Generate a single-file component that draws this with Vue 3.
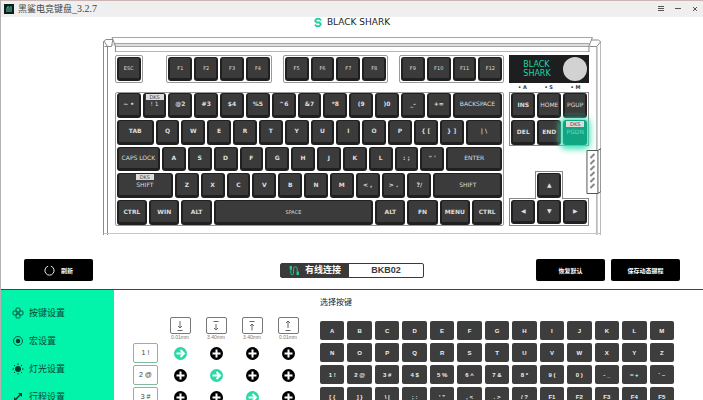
<script setup>
import { ref } from 'vue';

const k = (label, u = 1, opts = {}) => ({ label, u, ...opts });
const letters = (str) => str.split('').map((c) => k(c));

const functionGroups = [
  { start: 1, keys: ['ESC'] },
  { start: 9, keys: ['F1', 'F2', 'F3', 'F4'] },
  { start: 27, keys: ['F5', 'F6', 'F7', 'F8'] },
  { start: 45, keys: ['F9', 'F10', 'F11', 'F12'] },
];

const mainKeys = [
  k('~ •'), k('! 1', 1, { dks: true, thin: true }), k('@2'), k('#3'), k('$4'), k('%5'), k('^6'), k('&7'),
  k('*8'), k('(9'), k(')0'), k('_-'), k('+='), k('BACKSPACE', 2, { thin: true }),
  k('TAB', 1.5), ...letters('QWERTYUIOP'), k('{ ['), k('} ]'), k('| \\', 1.5),
  k('CAPS LOCK', 1.75, { thin: true }), ...letters('ASDFGHJKL'), k(': ;'), k('" \''),
  k('ENTER', 2.25, { thin: true }),
  k('SHIFT', 2.25, { thin: true, dks: true }), ...letters('ZXCVBNM'), k('< ,'), k('> .'), k('?/'),
  k('SHIFT', 2.75, { thin: true }),
  k('CTRL', 1.25), k('WIN', 1.25), k('ALT', 1.25), k('SPACE', 6.25, { small: true }),
  k('ALT', 1.25), k('FN', 1.25), k('MENU', 1.25), k('CTRL', 1.25),
];

const navKeys = [
  k('INS'), k('HOME', 1, { thin: true }), k('PGUP', 1, { thin: true }),
  k('DEL'), k('END'), k('PGDN', 1, { thin: true, dks: true }),
];
const selected = ref('PGDN');

const menu = [
  { icon: 'keys', text: '按键设置' },
  { icon: 'macro', text: '宏设置' },
  { icon: 'light', text: '灯光设置' },
  { icon: 'travel', text: '行程设置' },
];

const stages = [
  { path: 'M6 1v7M4 6l2 2 2-2M3.5 10.5h5', depth: '0.01mm' },
  { path: 'M3.5 1.5h5M6 4v6M4 8l2 2 2-2', depth: '3.40mm' },
  { path: 'M3.5 1.5h5M6 10.5v-6M4 6l2-2 2 2', depth: '3.40mm' },
  { path: 'M6 8V1M4 3l2-2 2 2M3.5 10.5h5', depth: '0.01mm' },
];
const bindings = ref([
  { name: '1 !', active: 0 },
  { name: '2 @', active: 1 },
  { name: '3 #', active: 2 },
]);

const pickerKeys = [
  ...'ABCDEFGHIJKLMNOPQRSTUVWXYZ'.split(''),
  '1 !', '2 @', '3 #', '4 $', '5 %', '6 ^', '7 &', '8 *', '9 (', '0 )', '- _', '= +', '` ~',
  '[ {', '] }', '\\ |', '; :', '\' "', ', <', '. >', '/ ?', 'F1', 'F2', 'F3', 'F4', 'F5',
];
</script>

<template>
  <div class="app">
    <header class="titlebar">
      <svg class="app-icon" viewBox="0 0 10 10">
        <rect width="10" height="10" fill="#07201b" />
        <path d="M3 8V4l1.5-2M5 8V3M7 8V2" stroke="#6fc7ae" stroke-width="1" fill="none" />
      </svg>
      <span class="title">黑鲨电竞键盘<span class="version">_3.2.7</span></span>
      <button class="win-btn" aria-label="菜单">
        <svg viewBox="0 0 6 6"><path d="M0 .5h6M0 2.5h6M0 4.500h6" /></svg>
      </button>
      <button class="win-btn" aria-label="最小化">
        <svg viewBox="0 0 6 6"><path d="M0 2.5h6" /></svg>
      </button>
      <button class="win-btn" aria-label="关闭">
        <svg viewBox="0 0 6 6"><path d="M1 1l4 4M5 1 1 5" /></svg>
      </button>
    </header>

    <div class="brand">
      <svg viewBox="0 0 8 10">
        <path d="M7.5 2.5 5.5 1h-3L1 2.5v1L2.5 5h3L7 6.5v1L5.5 9h-3L.5 7.5M4 0v2M4 8v2" />
      </svg>
      <span>BLACK SHARK</span>
    </div>

    <section class="board">
      <svg class="case" viewBox="0 0 500 199" preserveAspectRatio="none">
        <g fill="none" stroke="#8a8a8a" stroke-width="1">
          <rect x="9" y="7" width="480" height="2" fill="#dedede" stroke="none" />
          <path d="M9 .5h482M12 6.5h476M12 9.5h476" stroke="#a5a5a5" />
          <path d="M12 14.5h476" stroke="#b5b5b5" />
          <path d="M.5 198V4.500L3 2.500h7L8.500 9.500h-7M9 .5 12.500 9v6M4.500 10v188M1 4l3.500 5.500" />
          <path d="M491 .5 487.500 9v6M490 3h7l2.500 2V198M499 5l-3.500 4.500h-7M495.500 10v188" />
          <path d="M.5 196.5h499" stroke="#c4c4c4" />
        </g>
        <g stroke="#555" fill="#fff">
          <path d="M485.5 113.5h11v43h-11zM496.5 113.5l3-2v43l-3 2" />
          <path d="M489 121l4-4M489 127l4-4M489 133l4-4M489 139l4-4M489 145l4-4M489 151l4-4" stroke="#888" stroke-width="2" />
        </g>
      </svg>

      <div class="main-block">
        <div class="function-row">
          <div
            v-for="group in functionGroups"
            :key="group.start"
            class="group"
            :class="'from-' + group.start"
          >
            <button v-for="name in group.keys" :key="name" class="key small">{{ name }}</button>
          </div>
        </div>
        <div class="main-keys">
          <button
            v-for="(key, i) in mainKeys"
            :key="i"
            class="key"
            :class="{ thin: key.thin, small: key.small }"
            :style="{ gridColumn: 'span ' + key.u * 4 }"
          >
            <span v-if="key.dks" class="dks">DKS</span>{{ key.label }}
          </button>
        </div>
      </div>

      <div class="side-block">
        <div class="screen">
          <span>BLACK<br />SHARK</span>
          <i class="knob"></i>
        </div>
        <div class="leds"><span>• A</span><span>• S</span><span>• M</span></div>
        <div class="nav-keys">
          <button
            v-for="key in navKeys"
            :key="key.label"
            class="key"
            :class="{ thin: key.thin, selected: key.label === selected }"
            @click="selected = key.label"
          >
            <span v-if="key.dks" class="dks">DKS</span>{{ key.label }}
          </button>
        </div>
        <div class="arrows">
          <div class="arrow-up"><button class="key">▲</button></div>
          <div class="arrow-row">
            <button class="key">◀</button>
            <button class="key">▼</button>
            <button class="key">▶</button>
          </div>
        </div>
      </div>
    </section>

    <section class="toolbar">
      <button class="action">
        <svg viewBox="0 0 12 12"><path d="M7.5 1.3A5 5 0 1 1 4.5 1.3" /></svg>
        刷新
      </button>
      <div class="device">
        <span class="link">
          <svg viewBox="0 0 12 12">
            <path d="M2 1v8a1.5 1.5 0 0 0 3 0V4a2 2 0 0 1 4 0v3" />
            <path d="M2 1v4M9.5 7v4" stroke-width="2.5" />
          </svg>
          有线连接
        </span>
        <span class="model">BKB02</span>
      </div>
      <div class="actions">
        <button class="action">恢复默认</button>
        <button class="action">保存动态键程</button>
      </div>
    </section>

    <main class="panel">
      <nav class="sidebar">
        <a v-for="item in menu" :key="item.icon" href="#">
          <svg viewBox="0 0 12 12">
            <g v-if="item.icon === 'keys'" fill="none" stroke="#0b5c45">
              <rect x="4" y="1" width="4" height="4" rx="1" />
              <rect x="4" y="7" width="4" height="4" rx="1" />
              <rect x="1" y="4" width="4" height="4" rx="1" />
              <rect x="7" y="4" width="4" height="4" rx="1" />
            </g>
            <g v-else-if="item.icon === 'macro'">
              <circle cx="6" cy="6" r="4.5" fill="none" stroke="#0b5c45" />
              <circle cx="6" cy="6" r="2.2" fill="#063b2d" />
            </g>
            <g v-else-if="item.icon === 'light'">
              <circle cx="6" cy="6" r="3" fill="#063b2d" />
              <path d="M6 .5V2M6 10v1.5M.5 6H2M10 6h1.500M2 2l1 1M9 9l1 1M10 2 9 3M3 9l-1 1" stroke="#063b2d" />
            </g>
            <path v-else d="M6 2h4v4L8.500 4.500 4.500 8.500 6 10H2V6l1.500 1.500 4-4z" fill="#063b2d" />
          </svg>
          {{ item.text }}
        </a>
      </nav>

      <section class="mapping">
        <span></span>
        <div v-for="(stage, i) in stages" :key="i" class="stage">
          <div class="stage-box">
            <svg viewBox="0 0 12 12"><path :d="stage.path" /></svg>
          </div>
          <span>{{ stage.depth }}</span>
        </div>
        <template v-for="row in bindings" :key="row.name">
          <div class="bound-key">{{ row.name }}</div>
          <button
            v-for="n in 4"
            :key="n"
            class="dot"
            :class="{ on: row.active === n - 1 }"
            :aria-label="row.name + ' ' + n"
            @click="row.active = n - 1"
          >
            <svg viewBox="0 0 13 13">
              <path v-if="row.active === n - 1" d="M2.5 6.5h7M6.5 3 10 6.5 6.500 10" />
              <path v-else d="M6.5 2.5v8M2.5 6.5h8" />
            </svg>
          </button>
        </template>
      </section>

      <section class="picker">
        <h2>选择按键</h2>
        <div class="picker-grid">
          <button v-for="name in pickerKeys" :key="name">{{ name }}</button>
        </div>
      </section>
    </main>
  </div>
</template>

<style>
body {
  overflow: hidden;
}
</style>

<style scoped>
.app {
  display: flex;
  flex-direction: column;
  height: 100vh;
  box-sizing: border-box;
  border-left: 1px solid #b5b0b2;
  background: #fff;
  font-family: 'Liberation Sans', 'Noto Sans CJK SC', sans-serif;
  color: #222;
}

button {
  padding: 0;
  border: none;
  font-family: inherit;
  cursor: pointer;
}

.titlebar {
  display: flex;
  align-items: center;
  flex: none;
  height: 16px;
  padding: 0 4px 0 3px;
  border-top: 1px solid #cbb5b4;
  background: #efefef;
}

.app-icon {
  width: 10px;
  height: 10px;
  margin-right: 4px;
}

.title {
  flex: 1;
  font-family: 'Liberation Serif', 'Noto Sans CJK SC', serif;
  font-size: 9px;
  line-height: 14px;
  color: #444;
}

.version {
  font-size: 10px;
}

.win-btn {
  display: flex;
  margin-left: 9px;
  padding: 1px;
  background: none;
}

.win-btn svg {
  width: 6px;
  height: 6px;
  stroke: #555;
}

.brand {
  display: flex;
  justify-content: center;
  align-items: center;
  flex: none;
  gap: 5px;
  height: 11px;
  margin-bottom: 9px;
  font: 9px/11px 'DejaVu Sans', sans-serif;
}

.brand svg {
  width: 8px;
  height: 9px;
  fill: none;
  stroke: #1fcf9f;
  stroke-width: 2;
}

.board {
  position: relative;
  display: flex;
  flex: none;
  gap: 5px;
  width: 71%;
  height: 199px;
  box-sizing: border-box;
  margin: 0 auto;
  padding: 18px 12px 10px;
}

.case {
  position: absolute;
  inset: 0;
  width: 100%;
  height: 100%;
}

.main-block {
  position: relative;
  display: flex;
  flex-direction: column;
  flex: 390;
  gap: 9px;
  min-width: 0;
}

.function-row {
  display: grid;
  grid-template-columns: repeat(60, 1fr);
  height: 28px;
  padding: 0 1px;
}

.group {
  display: flex;
  grid-column-end: span 16;
  margin: 0 -1px;
  padding: 1px 0;
  border: 1px solid #999;
  border-radius: 2px;
}

.group .key {
  flex: 1;
}

.from-1 {
  grid-column: 1 / span 4;
}

.from-9 {
  grid-column-start: 9;
}

.from-27 {
  grid-column-start: 27;
}

.from-45 {
  grid-column-start: 45;
}

.main-keys {
  display: grid;
  grid-template-columns: repeat(60, 1fr);
  grid-auto-rows: 1fr;
  row-gap: 2px;
  flex: 1;
  border: 1px solid #999;
  border-radius: 2px;
}

.key {
  position: relative;
  min-width: 0;
  margin: 0 1px;
  border: 2px solid #202020;
  border-top-width: 1px;
  border-bottom-width: 3px;
  border-radius: 3px;
  background: #3b3b3b;
  color: #dedede;
  font: bold 6px/8px 'DejaVu Sans', sans-serif;
  white-space: nowrap;
}

.key.thin {
  font-weight: normal;
}

.key.small {
  font-size: 5px;
  font-weight: normal;
}

.dks {
  position: absolute;
  top: 0;
  left: 50%;
  width: 18px;
  transform: translateX(-50%);
  background: #dcdcdc;
  color: #444;
  font: 5px/6px 'DejaVu Sans', sans-serif;
}

.side-block {
  position: relative;
  display: flex;
  flex-direction: column;
  flex: 80;
  min-width: 0;
}

.screen {
  display: flex;
  align-items: center;
  justify-content: space-between;
  height: 28px;
  box-sizing: border-box;
  padding: 0 2px 0 14px;
  background: #1c1e1f;
  color: #1fd6a4;
  font: 8px/9px 'DejaVu Sans', sans-serif;
}

.knob {
  width: 24px;
  height: 24px;
  border-radius: 50%;
  background: #d2d2d2;
}

.leds {
  display: flex;
  justify-content: space-around;
  height: 9px;
  color: #333;
  font: bold 5px/9px 'DejaVu Sans', sans-serif;
}

.nav-keys {
  display: grid;
  grid-template-columns: repeat(3, 1fr);
  grid-template-rows: 1fr 1fr;
  row-gap: 2px;
  height: 54px;
  box-sizing: border-box;
  border: 1px solid #888;
}

.key.selected {
  border-color: #12a583;
  background: #12a583;
  box-shadow: 0 1px 6px 3px #3fe0b5;
  color: #6fd8bd;
}

.arrows {
  display: flex;
  flex-direction: column;
  align-items: center;
  margin-top: auto;
}

.arrow-up,
.arrow-row {
  display: flex;
  height: 28px;
  box-sizing: border-box;
  padding: 1px 0;
  border: 1px solid #888;
}

.arrow-up {
  position: relative;
  width: 28px;
  margin-bottom: -1px;
  border-bottom: none;
  background: #fff;
  z-index: 1;
}

.arrow-row {
  width: 100%;
}

.arrows .key {
  flex: 1;
}

.toolbar {
  display: grid;
  grid-template-columns: 1fr auto 1fr;
  align-items: center;
  flex: none;
  padding: 23px 23px 8px;
  border-bottom: 1px solid #444;
}

.action {
  display: flex;
  justify-content: center;
  align-items: center;
  gap: 6px;
  width: 69px;
  height: 22px;
  border-radius: 2px;
  background: #000;
  color: #fff;
  font-size: 6px;
  font-weight: bold;
}

.action svg {
  width: 11px;
  height: 11px;
  fill: none;
  stroke: #fff;
}

.actions {
  display: flex;
  justify-content: flex-end;
  gap: 6px;
}

.device {
  display: flex;
  width: 144px;
  height: 15px;
  box-sizing: border-box;
  border: 1px solid #3a3a3a;
  border-radius: 2px;
  font-size: 9px;
  font-weight: bold;
  line-height: 13px;
}

.link {
  display: flex;
  justify-content: center;
  align-items: center;
  gap: 5px;
  width: 68px;
  background: #3a3a3a;
  color: #fff;
}

.link svg {
  width: 11px;
  height: 11px;
  fill: none;
  stroke: #1fcf9f;
}

.model {
  flex: 1;
  color: #3a3a3a;
  text-align: center;
}

.panel {
  display: flex;
  flex: 1;
  min-height: 0;
  overflow: hidden;
}

.sidebar {
  display: flex;
  flex-direction: column;
  flex: none;
  gap: 14px;
  width: 113px;
  box-sizing: border-box;
  padding: 16px 0 0 11px;
  background: #02f3aa;
}

.sidebar a {
  display: flex;
  align-items: center;
  gap: 5px;
  color: #0a4636;
  font-size: 9px;
  line-height: 14px;
  text-decoration: none;
}

.sidebar svg {
  width: 12px;
  height: 12px;
}

.mapping {
  display: grid;
  grid-template-columns: 29px repeat(4, 36px);
  grid-template-rows: 24px;
  grid-auto-rows: 20px;
  align-content: start;
  justify-items: center;
  row-gap: 2px;
  flex: none;
  padding: 27px 0 0 19px;
}

.stage {
  color: #777;
  font-size: 5px;
  line-height: 7px;
  text-align: center;
}

.stage-box {
  display: flex;
  justify-content: center;
  align-items: center;
  width: 21px;
  height: 17px;
  box-sizing: border-box;
  border: 1px solid #777;
  border-radius: 2px;
}

.stage svg {
  width: 12px;
  height: 12px;
  fill: none;
  stroke: #666;
}

.bound-key {
  justify-self: start;
  width: 25px;
  box-sizing: border-box;
  border: 1px solid #80bb9f;
  border-radius: 2px;
  color: #444;
  font-size: 7px;
  line-height: 18px;
  text-align: center;
}

.dot {
  align-self: center;
  display: flex;
  width: 13px;
  height: 13px;
  border-radius: 50%;
  background: #000;
}

.dot.on {
  background: #26dba5;
}

.dot svg {
  width: 13px;
  height: 13px;
  fill: none;
  stroke: #fff;
  stroke-width: 2;
}

.picker {
  flex: 1;
  min-width: 0;
  padding: 7px 29px 0 14px;
}

.picker h2 {
  margin: 0 0 12px;
  font-size: 8px;
  font-weight: normal;
  line-height: 12px;
}

.picker-grid {
  display: grid;
  grid-template-columns: repeat(13, 1fr);
  grid-auto-rows: 19px;
  gap: 3px;
}

.picker-grid button {
  border-radius: 2px;
  background: #3d3d3d;
  color: #f0f0f0;
  font-size: 6px;
  font-weight: bold;
}
</style>
